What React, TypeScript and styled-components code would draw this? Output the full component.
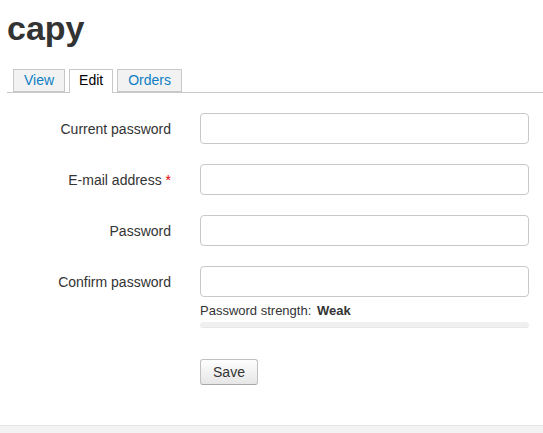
import React from "react";
import styled, { createGlobalStyle } from "styled-components";

const Global = createGlobalStyle`
  html, body { margin: 0; padding: 0; background: #fff; }
  body { font-family: "Liberation Sans", Arial, sans-serif; color: #333; }
`;

const Page = styled.div`
  width: 543px;
  height: 433px;
  display: flex;
  flex-direction: column;
  overflow: hidden;
`;

const Main = styled.div`
  flex: 1;
  padding: 0 0 0 7px;
`;

const Title = styled.h1`
  margin: 0;
  padding-top: 6px;
  font-size: 34px;
  line-height: 44px;
  font-weight: bold;
  color: #333;
`;

const Tabs = styled.ul`
  list-style: none;
  margin: 19px 0 0 0;
  padding: 0 0 0 6px;
  display: flex;
  gap: 4px;
  border-bottom: 1px solid #c8c8c8;
  height: 23px;
`;

const Tab = styled.li<{ $active?: boolean }>`
  box-sizing: border-box;
  height: ${(p) => (p.$active ? "24px" : "23px")};
  padding: 0 ${(p) => (p.$active ? "9px" : "10px")};
  border: 1px solid #c8c8c8;
  border-bottom: ${(p) => (p.$active ? "none" : "1px solid #c8c8c8")};
  background: ${(p) => (p.$active ? "#fff" : "#f2f2f2")};
  color: ${(p) => (p.$active ? "#000" : "#0d7ec4")};
  font-size: 14px;
  line-height: 21px;
`;

const Form = styled.div`
  display: grid;
  grid-template-columns: 164px 329px;
  column-gap: 29px;
  row-gap: 20px;
  margin-top: 20px;
  align-items: center;
`;

const Label = styled.label`
  text-align: right;
  font-size: 14px;
  color: #333;
`;

const Req = styled.span`
  color: #e00;
`;

const Input = styled.div`
  box-sizing: border-box;
  height: 31px;
  border: 1px solid #c8c8c8;
  border-radius: 4px;
  background: #fff;
`;

const Strength = styled.div`
  grid-column: 2;
  margin-top: -14px;
`;

const StrengthText = styled.div`
  font-size: 13px;
  line-height: 16px;
  color: #333;
  b { font-weight: bold; margin-left: 2px; }
`;

const Bar = styled.div`
  margin-top: 3px;
  height: 6px;
  border-radius: 3px;
  background: #f0f0f0;
  border-bottom: 1px solid #e8e8e8;
  box-sizing: border-box;
`;

const Actions = styled.div`
  grid-column: 2;
  margin-top: 11px;
`;

const Button = styled.button`
  box-sizing: border-box;
  width: 58px;
  height: 26px;
  border: 1px solid #c0c0c0;
  border-bottom-color: #a8a8a8;
  border-radius: 3px;
  background: linear-gradient(#fefefe, #e6e6e6);
  font-family: "Liberation Sans", Arial, sans-serif;
  font-size: 14px;
  color: #333;
  padding: 0;
`;

const Footer = styled.div`
  height: 7px;
  border-top: 1px solid #e4e4e4;
  background: #f3f3f3;
`;

export default function App() {
  return (
    <Page>
      <Global />
      <Main>
        <Title>capy</Title>
        <Tabs>
          <Tab>View</Tab>
          <Tab $active>Edit</Tab>
          <Tab>Orders</Tab>
        </Tabs>
        <Form>
          <Label>Current password</Label>
          <Input />
          <Label>
            E-mail address <Req>*</Req>
          </Label>
          <Input />
          <Label>Password</Label>
          <Input />
          <Label>Confirm password</Label>
          <Input />
          <Strength>
            <StrengthText>
              Password strength: <b>Weak</b>
            </StrengthText>
            <Bar />
          </Strength>
          <Actions>
            <Button>Save</Button>
          </Actions>
        </Form>
      </Main>
      <Footer />
    </Page>
  );
}
